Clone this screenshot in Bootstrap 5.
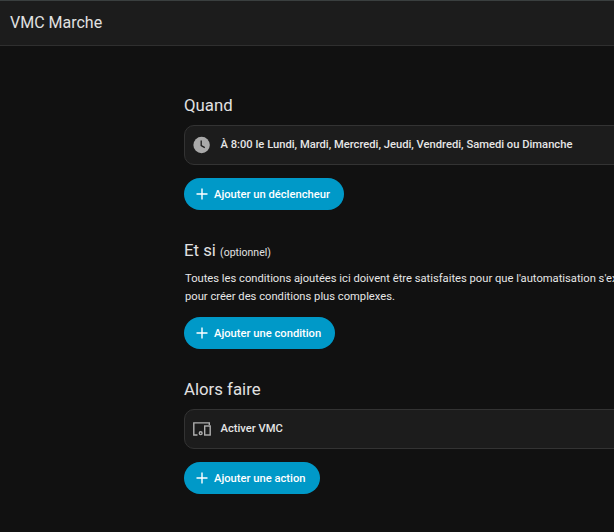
<!DOCTYPE html>
<html lang="fr">
<head>
<meta charset="utf-8">
<title>VMC Marche</title>
<link href="https://cdn.jsdelivr.net/npm/bootstrap@5.3.0/dist/css/bootstrap.min.css" rel="stylesheet">
<style>
html,body{height:100%;overflow:hidden}
body{background:#111;color:#e1e1e1;font-family:Roboto,"Liberation Sans",sans-serif}
.topbar{height:46px;background:#1c1c1c;border-top:1px solid #3a3f3f;border-bottom:1px solid #2f2f2f;padding-left:10px;font-size:16px;color:#e1e1e1}
.editor{margin-left:184px;width:720px;padding-top:47px}
.sect-title{font-size:16.8px;font-weight:400;line-height:24px;margin:0 0 8px 0;color:#e1e1e1}
.sect-title small{font-size:10.5px;color:#e1e1e1}
.intro{font-size:11.2px;line-height:18px;margin:0 0 11px 1px;padding-top:1px;color:#e6e6e6;white-space:nowrap}
.rowcard{height:40px;background:#1c1c1c;border:1px solid #333;border-radius:10px;padding-left:8px;gap:9.5px;font-size:11.2px;font-weight:500;color:#e6e6e6}
.rowcard svg{flex:none}
.addbtn{height:32px;background:#0099c8;color:#fff;font-size:11.2px;font-weight:500;border:0;border-radius:16px;padding:0 14px 0 11px;gap:5px;margin-top:13px}
.addbtn:hover{background:#0099c8;color:#fff}
.addlabel{padding-top:2px}
.sect{margin-bottom:28px}
</style>
</head>
<body>
<header class="topbar d-flex align-items-center">VMC Marche</header>
<main class="editor">
  <section class="sect">
    <h2 class="sect-title">Quand</h2>
    <div class="rowcard d-flex align-items-center">
      <svg width="18" height="18" viewBox="0 0 18 18"><circle cx="8.6" cy="9" r="8.2" fill="#a9a9a9"/><path d="M8.2 4.6V9.6L11.8 11.6" fill="none" stroke="#1c1c1c" stroke-width="1.3"/></svg>
      <span>À 8:00 le Lundi, Mardi, Mercredi, Jeudi, Vendredi, Samedi ou Dimanche</span>
    </div>
    <button class="btn addbtn d-inline-flex align-items-center"><svg width="14" height="14" viewBox="0 0 14 14"><path d="M7 1.5V12.5M1.5 7H12.5" stroke="#fff" stroke-width="1.4" fill="none"/></svg><span class="addlabel">Ajouter un déclencheur</span></button>
  </section>
  <section class="sect">
    <h2 class="sect-title mb-1">Et si <small>(optionnel)</small></h2>
    <p class="intro">Toutes les conditions ajoutées ici doivent être satisfaites pour que l'automatisation s'exécute. Utilisez un bloc<br>pour créer des conditions plus complexes.</p>
    <button class="btn addbtn d-inline-flex align-items-center mt-0"><svg width="14" height="14" viewBox="0 0 14 14"><path d="M7 1.5V12.5M1.5 7H12.5" stroke="#fff" stroke-width="1.4" fill="none"/></svg><span class="addlabel">Ajouter une condition</span></button>
  </section>
  <section>
    <h2 class="sect-title">Alors faire</h2>
    <div class="rowcard d-flex align-items-center">
      <svg width="18" height="14" viewBox="0 0 18 14" fill="none" stroke="#b0b0b0" stroke-width="1.4"><path d="M16.3 3V.9H.8V13H4.5"/><circle cx="7.7" cy="11.2" r="1.4"/><rect x="11.7" y="4" width="5.5" height="9"/></svg>
      <span>Activer VMC</span>
    </div>
    <button class="btn addbtn d-inline-flex align-items-center"><svg width="14" height="14" viewBox="0 0 14 14"><path d="M7 1.5V12.5M1.5 7H12.5" stroke="#fff" stroke-width="1.4" fill="none"/></svg><span class="addlabel">Ajouter une action</span></button>
  </section>
</main>
</body>
</html>
